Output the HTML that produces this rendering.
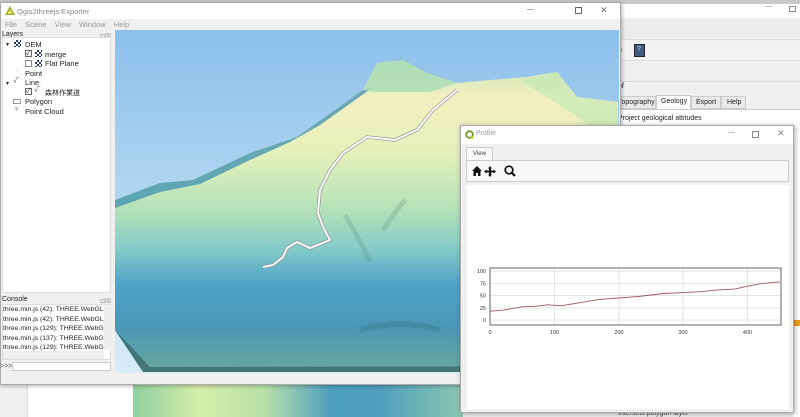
<!DOCTYPE html>
<html><head><meta charset="utf-8"><style>
*{margin:0;padding:0;box-sizing:border-box}
body{width:800px;height:417px;overflow:hidden;position:relative;background:#f0f0f0;font-family:"Liberation Sans","Noto Sans CJK JP",sans-serif;font-size:7px;color:#222}
.a{position:absolute}
.t{position:absolute;white-space:nowrap;font-size:7px}
</style></head><body>
<div class="a" style="left:0;top:0;width:800px;height:4px;background:#c9c9c9"></div>
<div class="a" style="left:620px;top:4px;width:180px;height:14px;background:#fff"></div>
<div class="t" style="left:765px;top:3px;color:#777">—</div><div class="a" style="left:789px;top:6px;width:7px;height:6px;border:1px solid #888"></div>
<div class="a" style="left:620px;top:20px;width:180px;height:20px;background:#ececec;border-bottom:1px solid #ddd"></div>
<div class="a" style="left:620px;top:41px;width:180px;height:20px;background:#f3f3f3;border-bottom:1px solid #ddd"></div>
<div class="a" style="left:634px;top:44px;width:11px;height:13px;background:#3d5a80;border:1px solid #223"></div>
<div class="t" style="left:637px;top:46px;color:#cde">?</div>
<div class="t" style="left:618px;top:47px;color:#333">3</div>
<div class="a" style="left:620px;top:62px;width:180px;height:20px;background:#efefef;border-bottom:1px solid #ddd"></div>
<div class="t" style="left:618px;top:83px">of</div>
<div class="a" style="left:620px;top:96px;width:36px;height:13px;border:1px solid #ccc;background:#eaeaea"></div><div class="t" style="left:618px;top:99px">Topography</div>
<div class="a" style="left:656px;top:95px;width:35px;height:14px;border:1px solid #ccc;border-bottom:none;background:#fff"></div><div class="t" style="left:661px;top:98px">Geology</div>
<div class="a" style="left:691px;top:96px;width:30px;height:13px;border:1px solid #ccc;background:#eaeaea"></div><div class="t" style="left:696px;top:99px">Export</div>
<div class="a" style="left:721px;top:96px;width:25px;height:13px;border:1px solid #ccc;background:#eaeaea"></div><div class="t" style="left:727px;top:99px">Help</div>
<div class="a" style="left:615px;top:109px;width:185px;height:20px;background:#fff;border-top:1px solid #ccc"></div>
<div class="t" style="left:618px;top:115px">Project geological attitudes</div>
<div class="a" style="left:793px;top:130px;width:7px;height:287px;background:#fff"></div>
<div class="a" style="left:793px;top:320px;width:7px;height:6px;background:#f0a020"></div>
<div class="a" style="left:27px;top:385px;width:106px;height:32px;background:#fff;border-left:1px solid #ddd"></div>
<div class="a" style="left:133px;top:385px;width:330px;height:32px;background:linear-gradient(90deg,#8fd0a0,#d6eeaa 20%,#b8e0a8 40%,#4d9fbf 60%,#4f9fbe 75%,#8cc8b0 100%)"></div>
<div class="t" style="left:618px;top:410px;color:#444">Intersect polygon layer</div>

<div class="a" style="left:0;top:2px;width:621px;height:383px;background:#f0f0f0;border:1px solid #aaa;box-shadow:1px 1px 4px rgba(0,0,0,.3)"></div>
<div class="a" style="left:1px;top:3px;width:619px;height:16px;background:#fff"></div>
<svg class="a" style="left:5px;top:6px" width="10" height="9"><polygon points="5,0 10,9 0,9" fill="#8aa72f"/><polygon points="5,3 8,8 2,8" fill="#e8e060"/></svg>
<div class="t" style="left:17px;top:7px;color:#888;font-size:7.5px">Qgis2threejs Exporter</div>
<div class="t" style="left:527px;top:6px;color:#666">—</div>
<div class="a" style="left:575px;top:7px;width:7px;height:7px;border:1px solid #666"></div>
<div class="t" style="left:600px;top:5px;color:#666;font-size:9px">✕</div>
<div class="t" style="left:5px;top:20px;color:#999;font-size:7.5px;word-spacing:2px">File &nbsp;Scene &nbsp;View &nbsp;Window &nbsp;Help</div>
<div class="t" style="left:2px;top:31px">Layers</div>
<div class="t" style="left:100px;top:31px;color:#888;font-size:6px">⊡⊠</div>
<div class="a" style="left:2px;top:37px;width:109px;height:256px;background:#fff;border:1px solid #ddd"></div>
<div class="t" style="left:6px;top:41px;font-size:6px">▾</div>
<div class="a" style="left:14px;top:40px;width:7px;height:7px;background:repeating-conic-gradient(#1c3a6e 0 25%,#fff 0 50%) 0 0/4px 4px"></div>
<div class="t" style="left:25px;top:40px;font-size:7.5px">DEM</div>
<div class="a" style="left:25px;top:50px;width:7px;height:7px;border:1px solid #666;font-size:7px;line-height:5px">✓</div>
<div class="a" style="left:35px;top:50px;width:7px;height:7px;background:repeating-conic-gradient(#1c3a6e 0 25%,#fff 0 50%) 0 0/4px 4px"></div>
<div class="t" style="left:45px;top:50px;font-size:7.5px">merge</div>
<div class="a" style="left:25px;top:60px;width:7px;height:7px;border:1px solid #888"></div>
<div class="a" style="left:35px;top:60px;width:7px;height:7px;background:repeating-conic-gradient(#1c3a6e 0 25%,#fff 0 50%) 0 0/4px 4px"></div>
<div class="t" style="left:45px;top:59px;font-size:7.5px">Flat Plane</div>
<div class="t" style="left:15px;top:68px;color:#777;font-size:6px">·:</div><div class="t" style="left:25px;top:69px;font-size:7.5px">Point</div>
<div class="t" style="left:6px;top:80px;font-size:6px">▾</div><div class="t" style="left:13px;top:78px;color:#555">√‾</div><div class="t" style="left:25px;top:78px;font-size:7.5px">Line</div>
<div class="a" style="left:25px;top:88px;width:7px;height:7px;border:1px solid #666;font-size:7px;line-height:5px">✓</div>
<div class="t" style="left:34px;top:87px;color:#555">√‾</div><div class="t" style="left:45px;top:88px">森林作業道</div>
<div class="a" style="left:13px;top:99px;width:8px;height:5px;border:1px solid #999"></div><div class="t" style="left:25px;top:97px;font-size:7.5px">Polygon</div>
<div class="t" style="left:14px;top:106px;color:#888;font-size:6px">⁜</div><div class="t" style="left:25px;top:107px;font-size:7.5px">Point Cloud</div>
<div class="t" style="left:2px;top:296px">Console</div>
<div class="t" style="left:100px;top:296px;color:#888;font-size:6px">⊡⊠</div>
<div class="a" style="left:2px;top:304px;width:109px;height:56px;background:#fff;border:1px solid #ddd"></div>
<div class="a" style="left:3px;top:305px;line-height:9.5px;font-size:6.8px;color:#222;width:101px;height:53px;overflow:hidden;white-space:nowrap">three.min.js (42): THREE.WebGLRenderer<br>three.min.js (42): THREE.WebGLRenderer<br>three.min.js (129): THREE.WebGLRenderer<br>three.min.js (137): THREE.WebGLRenderer<br>three.min.js (129): THREE.WebGLRenderer<br>three.min.js (137): THREE.WebGLRenderer</div>
<div class="a" style="left:104px;top:305px;width:7px;height:45px;background:#eee"></div>
<div class="a" style="left:3px;top:351px;width:101px;height:8px;background:#eee"></div>
<div class="t" style="left:0;top:363px;color:#555">&gt;&gt;&gt;</div>
<div class="a" style="left:12px;top:362px;width:99px;height:9px;background:#fff;border:1px solid #ccc"></div>
<svg class="a" style="left:115px;top:30px" width="504" height="343" viewBox="115 30 504 343">
<defs>
<linearGradient id="sky" x1="0" y1="0" x2="0" y2="1"><stop offset="0" stop-color="#8cc0ea"/><stop offset="1" stop-color="#d8ecf8"/></linearGradient>
<linearGradient id="ter" x1="0" y1="60" x2="0" y2="372" gradientUnits="userSpaceOnUse">
<stop offset="0" stop-color="#c8e6b4"/><stop offset="0.12" stop-color="#f3efc2"/><stop offset="0.3" stop-color="#e4f0ba"/><stop offset="0.48" stop-color="#b4e2b8"/><stop offset="0.6" stop-color="#86ccc8"/><stop offset="0.72" stop-color="#4fa3c8"/><stop offset="0.86" stop-color="#4a98b6"/><stop offset="1" stop-color="#6aa89e"/></linearGradient>
</defs>
<rect x="115" y="30" width="504" height="343" fill="url(#sky)"/>
<polygon points="115,200 160,183 193,180 250,153 297,137 363,90 377,63 403,60 427,73 457,83 490,80 527,77 557,72 577,97 618,102 618,372 143,372 115,330" fill="url(#ter)"/>
<polygon points="115,200 160,183 193,180 250,153 297,137 363,90 372,88 320,125 290,142 250,160 200,184 160,192 115,208" fill="#3d8fb2" opacity=".75"/>
<polygon points="363,90 377,63 403,60 427,73 457,83 430,92 372,92" fill="#a8dcb8" opacity=".8"/>
<polygon points="520,80 557,72 577,97 618,102 618,150 575,115" fill="#bfe6b4" opacity=".6"/>
<path d="M345,215 Q360,240 370,262 M383,230 Q395,212 405,200" stroke="#5a8a78" stroke-width="5" fill="none" opacity=".25"/>
<path d="M360,330 Q400,318 440,330" stroke="#2a5a60" stroke-width="6" fill="none" opacity=".2"/>
<polygon points="115,330 143,372 618,372 618,366 150,367" fill="#2f5a58" opacity=".6"/>
<polyline points="263,267 273,265 283,257 287,248 297,242 310,248 330,240 323,227 318,213 320,190 330,170 343,153 367,137 395,140 417,130 433,110 457,90" fill="none" stroke="#888" stroke-width="3.2"/>
<polyline points="263,267 273,265 283,257 287,248 297,242 310,248 330,240 323,227 318,213 320,190 330,170 343,153 367,137 395,140 417,130 433,110 457,90" fill="none" stroke="#fff" stroke-width="2"/>
</svg>

<div class="a" style="left:460px;top:125px;width:334px;height:288px;background:#f0f0f0;border:1px solid #aaa;box-shadow:1px 1px 5px rgba(0,0,0,.35)"></div>
<div class="a" style="left:461px;top:126px;width:332px;height:18px;background:#fff"></div>
<svg class="a" style="left:465px;top:130px" width="9" height="9"><circle cx="4.5" cy="4.5" r="3.3" fill="none" stroke="#6a9a2a" stroke-width="1.8"/><line x1="6" y1="6" x2="8.5" y2="8.5" stroke="#e0c020" stroke-width="1.6"/></svg>
<div class="t" style="left:476px;top:130px;color:#999">Profile</div>
<div class="t" style="left:728px;top:129px;color:#888">—</div>
<div class="a" style="left:752px;top:131px;width:7px;height:7px;border:1px solid #888"></div>
<div class="t" style="left:777px;top:128px;color:#888;font-size:9px">✕</div>
<div class="a" style="left:466px;top:147px;width:27px;height:14px;background:#f8f8f8;border:1px solid #ccc;border-bottom:none"></div>
<div class="t" style="left:473px;top:151px;font-size:6px;color:#444">View</div>
<div class="a" style="left:466px;top:160px;width:323px;height:22px;background:#f8f8f8;border:1px solid #ccc"></div>
<svg class="a" style="left:471px;top:164px" width="50" height="14">
<path d="M1,7 L6,2 L11,7 L9.5,7 L9.5,12 L7,12 L7,9 L5,9 L5,12 L2.5,12 L2.5,7 Z" fill="#111"/>
<path d="M19,2 L21,4.5 L20,4.5 L20,6.5 L22.5,6.5 L22.5,5.5 L25,7.5 L22.5,9.5 L22.5,8.5 L20,8.5 L20,10.5 L21,10.5 L19,13 L17,10.5 L18,10.5 L18,8.5 L15.5,8.5 L15.5,9.5 L13,7.5 L15.5,5.5 L15.5,6.5 L18,6.5 L18,4.5 L17,4.5 Z" fill="#111"/>
<circle cx="38" cy="6" r="3.8" fill="none" stroke="#111" stroke-width="1.7"/><line x1="40.5" y1="8.5" x2="44" y2="12" stroke="#111" stroke-width="2.2"/>
</svg>
<div class="a" style="left:467px;top:185px;width:322px;height:224px;background:#fff"></div>
<svg class="a" style="left:467px;top:260px" width="322" height="80" viewBox="467 260 322 80">
<g stroke="#ddd" stroke-width="0.8">
<line x1="490" x2="781" y1="271" y2="271"/><line x1="490" x2="781" y1="283.5" y2="283.5"/><line x1="490" x2="781" y1="295.5" y2="295.5"/><line x1="490" x2="781" y1="308" y2="308"/><line x1="490" x2="781" y1="320" y2="320"/>
<line x1="554.5" x2="554.5" y1="268" y2="325"/><line x1="619" x2="619" y1="268" y2="325"/><line x1="683" x2="683" y1="268" y2="325"/><line x1="747.5" x2="747.5" y1="268" y2="325"/>
</g>
<rect x="490" y="268" width="291" height="57" fill="none" stroke="#555" stroke-width="0.9"/>
<polyline fill="none" stroke="#a0585a" stroke-width="0.9" points="490,311.2 502.9,310.2 522.2,306.8 535.1,306.3 548,304.8 560.8,305.8 599.5,299.4 618.8,298 638.1,296.5 663.9,293.5 683.2,292.6 702.5,291.6 715.4,290.1 734.7,289.1 747.6,286.2 760.5,283.7 779.8,281.8"/>
<g font-family="Liberation Sans" font-size="5.5" fill="#333" text-anchor="end">
<text x="486" y="273">100</text><text x="486" y="285.5">75</text><text x="486" y="297.5">50</text><text x="486" y="310">25</text><text x="486" y="322">0</text>
</g>
<g font-family="Liberation Sans" font-size="5.5" fill="#333" text-anchor="middle">
<text x="490" y="334">0</text><text x="554.5" y="334">100</text><text x="619" y="334">200</text><text x="683" y="334">300</text><text x="747.5" y="334">400</text>
</g>
</svg>
</body></html>
